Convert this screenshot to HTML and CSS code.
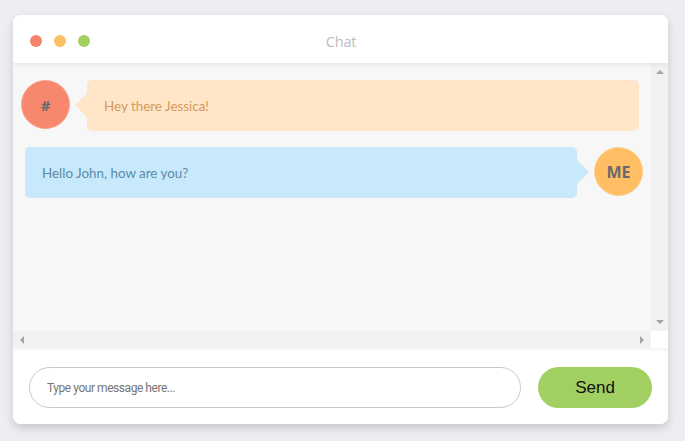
FILE: index.html
```html
<!DOCTYPE html>
<html lang="en">
<head>
<meta charset="utf-8">
<title>Chat</title>
<link rel="stylesheet" href="styles.css">
</head>
<body>
<div class="window">
  <header class="titlebar">
    <div class="dots">
      <span class="dot dot-red"></span>
      <span class="dot dot-yellow"></span>
      <span class="dot dot-green"></span>
    </div>
    <div class="title">Chat</div>
  </header>
  <main class="chat">
    <div class="scroller">
      <div class="scroll-main">
        <div class="messages">
          <div class="msg msg-in">
            <div class="avatar avatar-in">#</div>
            <div class="bubble bubble-in">Hey there Jessica!</div>
          </div>
          <div class="msg msg-out">
            <div class="bubble bubble-out">Hello John, how are you?</div>
            <div class="avatar avatar-out">ME</div>
          </div>
        </div>
        <div class="vbar">
          <span class="arrow arrow-up"></span>
          <span class="arrow arrow-down"></span>
        </div>
      </div>
      <div class="scroll-bottom">
        <div class="hbar">
          <span class="arrow arrow-left"></span>
          <span class="arrow arrow-right"></span>
        </div>
        <div class="corner"></div>
      </div>
    </div>
  </main>
  <footer class="composer">
    <input class="input" type="text" placeholder="Type your message here...">
    <button class="send" type="button">Send</button>
  </footer>
</div>
</body>
</html>
```

FILE: styles.css
```css
* { box-sizing: border-box; }
html, body { margin: 0; padding: 0; }
body {
  background: #edeef2;
  width: 685px;
  height: 441px;
  overflow: hidden;
  font-family: Lato, "Open Sans", sans-serif;
  padding: 15px 17px 0 13px;
}
.window {
  width: 655px;
  height: 409px;
  background: #fff;
  border-radius: 8px;
  box-shadow: 0 4px 10px rgba(0,0,0,0.16);
  display: flex;
  flex-direction: column;
  overflow: hidden;
}
.titlebar {
  height: 48px;
  flex: none;
  display: flex;
  align-items: center;
  position: relative;
  z-index: 2;
  background: #fff;
  box-shadow: 0 2px 5px rgba(0,0,0,0.06);
  padding-left: 17px;
}
.dots { display: flex; gap: 12px; padding-top: 4px; }
.dot { width: 12px; height: 12px; border-radius: 50%; display: block; }
.dot-red { background: #f4856c; }
.dot-yellow { background: #fdbf62; }
.dot-green { background: #a1cf62; }
.title {
  flex: 1;
  text-align: center;
  margin-right: 76px;
  padding-top: 4px;
  color: #bdbdbd;
  font-family: "Open Sans", sans-serif;
  font-size: 14.5px;
  letter-spacing: -0.2px;
}
.chat {
  height: 288px;
  flex: none;
  background: #f7f7f7;
  padding-bottom: 3px;
}
.scroller { height: 285px; display: flex; flex-direction: column; }
.scroll-main { flex: 1; display: flex; min-height: 0; }
.messages {
  flex: 1;
  padding: 17px 8px 0;
  display: flex;
  flex-direction: column;
  gap: 16px;
}
.msg { display: flex; align-items: flex-start; gap: 17px; }
.msg-out { padding-left: 4px; }
.avatar {
  width: 49px;
  height: 49px;
  border-radius: 50%;
  flex: none;
  display: flex;
  align-items: center;
  justify-content: center;
  color: #6a6a6a;
  font-weight: 700;
  font-family: "Open Sans", sans-serif;
}
.avatar-in {
  background: #f7876d;
  border: 1px solid #f9a490;
  font-size: 15px;
}
.avatar-out {
  background: #ffbd64;
  border: 1px solid #ffd08e;
  font-size: 16px;
}
.bubble {
  width: 552px;
  height: 51px;
  border-radius: 5px;
  display: flex;
  align-items: center;
  padding-left: 17px;
  font-size: 13.4px;
  position: relative;
}
.bubble-in { background: #ffe6c9; color: #d49a5b; }
.bubble-out { background: #c7e9fb; color: #5b8ba7; }
.bubble-in::before {
  content: "";
  position: absolute;
  left: -12px;
  top: 13px;
  border-top: 12px solid transparent;
  border-bottom: 12px solid transparent;
  border-right: 12px solid #ffe6c9;
}
.bubble-out::after {
  content: "";
  position: absolute;
  right: -12px;
  top: 13px;
  border-top: 12px solid transparent;
  border-bottom: 12px solid transparent;
  border-left: 12px solid #c7e9fb;
}
.vbar {
  width: 17px;
  flex: none;
  background: #f1f1f1;
  display: flex;
  flex-direction: column;
  justify-content: space-between;
  align-items: center;
  padding: 7px 0 7px;
}
.scroll-bottom { height: 17px; flex: none; display: flex; }
.hbar {
  flex: 1;
  background: #f1f1f1;
  display: flex;
  justify-content: space-between;
  align-items: center;
  padding: 0 7px;
}
.corner { width: 17px; background: #fff; }
.arrow { width: 0; height: 0; display: block; }
.arrow-up {
  border-left: 4px solid transparent;
  border-right: 4px solid transparent;
  border-bottom: 4px solid #a3a3a3;
}
.arrow-down {
  border-left: 4px solid transparent;
  border-right: 4px solid transparent;
  border-top: 4px solid #a3a3a3;
}
.arrow-left {
  border-top: 4px solid transparent;
  border-bottom: 4px solid transparent;
  border-right: 4px solid #a3a3a3;
}
.arrow-right {
  border-top: 4px solid transparent;
  border-bottom: 4px solid transparent;
  border-left: 4px solid #a3a3a3;
}
.composer {
  flex: 1;
  display: flex;
  align-items: center;
  padding: 0 16px 0 16px;
  gap: 17px;
  background: #fff;
}
.input {
  width: 492px;
  height: 41px;
  border: 1px solid #c9c9c9;
  border-radius: 21px;
  padding: 0 17px;
  font-family: Roboto, sans-serif;
  font-size: 12px;
  letter-spacing: -0.45px;
  color: #333;
  background: #fff;
  outline: none;
}
.input::placeholder { color: #757575; }
.send {
  width: 114px;
  height: 41px;
  border: none;
  border-radius: 21px;
  background: #a2cf62;
  color: #111;
  font-family: "Liberation Sans", Arial, sans-serif;
  font-size: 17px;
  padding: 0;
}
```
